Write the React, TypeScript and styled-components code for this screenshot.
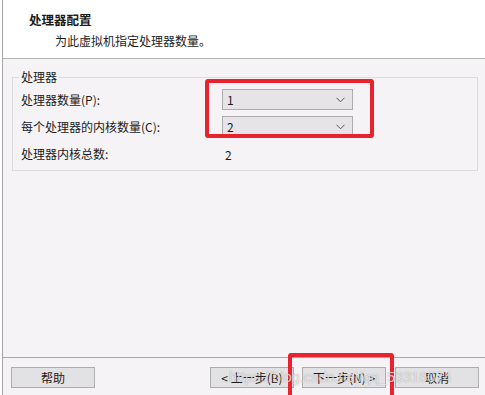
import React from "react";
import styled, { createGlobalStyle } from "styled-components";

const Global = createGlobalStyle`
  html, body {
    margin: 0;
    padding: 0;
    background: #ffffff;
  }
  body {
    font-family: "Noto Sans CJK SC", "Microsoft YaHei", sans-serif;
    font-size: 12px;
    color: #1b1b1b;
  }
`;

const Window = styled.div`
  position: relative;
  width: 482px;
  height: 395px;
  margin-left: 2px;
  border-left: 1px solid #a3a3a3;
  display: flex;
  flex-direction: column;
  overflow: hidden;
`;

const Header = styled.div`
  height: 59px;
  background: #ffffff;
  border-bottom: 1px solid #b4b4b4;
  box-sizing: border-box;
  padding: 11px 0 0 26px;
`;

const Title = styled.div`
  font-weight: bold;
  font-size: 12.5px;
  line-height: 17px;
`;

const Subtitle = styled.div`
  margin: 4px 0 0 26px;
  line-height: 17px;
`;

const Body = styled.div`
  flex: 1;
  background: #f6f3f6;
  padding: 11px 8px 0 9px;
  box-sizing: border-box;
`;

const Group = styled.fieldset`
  margin: 0;
  width: 466px;
  height: 101px;
  box-sizing: border-box;
  border: 1px solid #dcdcdc;
  padding: 0 0 0 8px;
`;

const Legend = styled.legend`
  padding: 0 2px;
  margin-left: -2px;
  line-height: 14px;
`;

const Rows = styled.div`
  display: grid;
  grid-template-columns: 201px 131px;
  grid-auto-rows: 27px;
  align-items: center;
  margin-top: 2px;
`;

const Select = styled.div`
  height: 21px;
  box-sizing: border-box;
  border: 1px solid #adadad;
  background: #e6e4e7;
  display: flex;
  align-items: center;
  justify-content: space-between;
  padding: 0 7px 0 4px;
`;

const Value = styled.div`
  padding-left: 3px;
  margin-top: 2px;
`;

const Footer = styled.div`
  height: 38px;
  background: #f6f3f6;
  border-top: 1px solid #a8a8a8;
  display: flex;
  align-items: flex-start;
  padding: 9px 5px 0 8px;
  box-sizing: border-box;
`;

const Button = styled.div<{ $gap?: number }>`
  width: 84px;
  height: 21px;
  box-sizing: border-box;
  border: 1px solid #adadad;
  background: #e2e1e3;
  display: flex;
  align-items: center;
  justify-content: center;
  margin-left: ${(p) => p.$gap ?? 0}px;
`;

const Highlight = styled.div<{ $x: number; $y: number; $w: number; $h: number }>`
  position: absolute;
  left: ${(p) => p.$x}px;
  top: ${(p) => p.$y}px;
  width: ${(p) => p.$w}px;
  height: ${(p) => p.$h}px;
  border: 4px solid #e8232e;
  border-radius: 3px;
  box-sizing: border-box;
  pointer-events: none;
`;

const Watermark = styled.div`
  position: absolute;
  left: 226px;
  top: 369px;
  font-family: "Liberation Sans", Arial, sans-serif;
  font-size: 14.5px;
  color: rgba(255, 255, 255, 0.7);
  text-shadow: 0 0 1px rgba(90, 90, 90, 0.6);
  pointer-events: none;
  white-space: nowrap;
`;

function Chevron() {
  return (
    <svg width="9" height="6" viewBox="0 0 9 6">
      <path d="M0.5 0.8 L4.5 4.8 L8.5 0.8" fill="none" stroke="#555" strokeWidth="1" />
    </svg>
  );
}

export default function App() {
  return (
    <>
      <Global />
      <Window>
        <Header>
          <Title>处理器配置</Title>
          <Subtitle>为此虚拟机指定处理器数量。</Subtitle>
        </Header>
        <Body>
          <Group>
            <Legend>处理器</Legend>
            <Rows>
              <span>处理器数量(P):</span>
              <Select>
                1
                <Chevron />
              </Select>
              <span>每个处理器的内核数量(C):</span>
              <Select>
                2
                <Chevron />
              </Select>
              <span>处理器内核总数:</span>
              <Value>2</Value>
            </Rows>
          </Group>
        </Body>
        <Footer>
          <Button>帮助</Button>
          <Button $gap={115}>&lt; 上一步(B)</Button>
          <Button $gap={8}>下一步(N) &gt;</Button>
          <Button $gap={9}>取消</Button>
        </Footer>
        <Highlight $x={202} $y={79} $w={169} $h={59} />
        <Highlight $x={285} $y={353} $w={106} $h={50} />
        <Watermark>https://blog.csdn.net/qq_53316074</Watermark>
      </Window>
    </>
  );
}
